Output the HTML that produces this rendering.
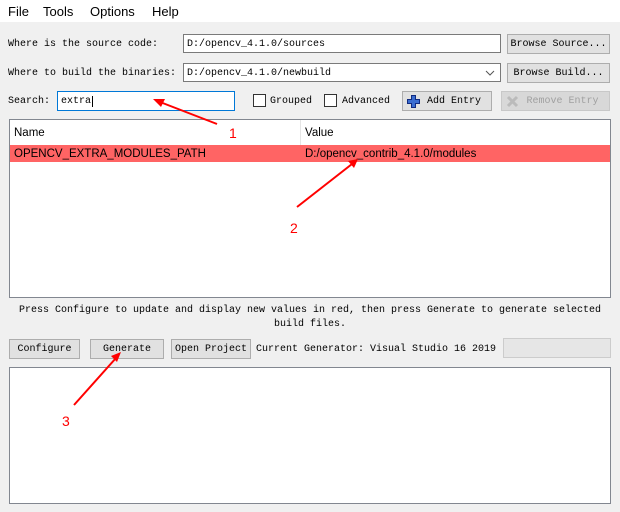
<!DOCTYPE html>
<html><head><style>
*{box-sizing:border-box;margin:0;padding:0}
body{width:620px;height:512px;background:#f0f0f0;position:relative;overflow:hidden;font-family:"Liberation Mono","Noto Sans CJK SC",monospace;font-size:10px;color:#000}
.a{position:absolute;white-space:nowrap}
.menu{left:0;top:0;width:620px;height:22px;background:#fff;font-family:"Liberation Sans",sans-serif;font-size:13px}
.menu span{position:absolute;top:4px}
.inp{position:absolute;background:#fff;border:1px solid #7a7a7a;padding:4px 3px 0;line-height:12px}
.btn{position:absolute;background:#e1e1e1;border:1px solid #adadad;text-align:center;line-height:19px}
.cb{position:absolute;width:13px;height:13px;border:1px solid #333;background:#fff}
.sans{font-family:"Liberation Sans",sans-serif;font-size:11.5px}
</style></head><body>
<div class="a menu"><span style="left:8px">File</span><span style="left:43px">Tools</span><span style="left:90px">Options</span><span style="left:152px">Help</span></div>
<div class="a" style="left:8px;top:39px">Where is the source code:</div>
<div class="inp" style="left:183px;top:34px;width:318px;height:19px">D:/opencv_4.1.0/sources</div>
<div class="btn" style="left:507px;top:34px;width:103px;height:20px">Browse Source...</div>
<div class="a" style="left:8px;top:68px">Where to build the binaries:</div>
<div class="inp" style="left:183px;top:63px;width:318px;height:19px">D:/opencv_4.1.0/newbuild
<svg style="position:absolute;right:5px;top:6px" width="10" height="6"><path d="M1 1L5 5L9 1" stroke="#555" fill="none"/></svg></div>
<div class="btn" style="left:507px;top:63px;width:103px;height:20px">Browse Build...</div>
<div class="a" style="left:8px;top:96px">Search:</div>
<div class="inp" style="left:57px;top:91px;width:178px;height:20px;border-color:#0078d7">extra<span style="border-left:1px solid #000;margin-left:1px"></span></div>
<div class="cb" style="left:253px;top:94px"></div><div class="a" style="left:270px;top:96px">Grouped</div>
<div class="cb" style="left:324px;top:94px"></div><div class="a" style="left:342px;top:96px">Advanced</div>
<div class="btn" style="left:402px;top:91px;width:90px;height:20px;padding-left:14px">Add Entry
<svg style="position:absolute;left:4px;top:3px" width="13" height="13"><path d="M4.5 0.5h4v4h4v4h-4v4h-4v-4h-4v-4h4z" fill="#3a6cd0" stroke="#102a80"/></svg></div>
<div class="btn" style="left:501px;top:91px;width:109px;height:20px;color:#a0a0a0;background:#d8d8d8;border-color:#c8c8c8;padding-left:14px">Remove Entry
<svg style="position:absolute;left:4px;top:3px" width="13" height="13"><path d="M2 2L11 11M11 2L2 11" stroke="#bbb" stroke-width="3"/></svg></div>
<div class="a" style="left:9px;top:119px;width:602px;height:179px;background:#fff;border:1px solid #828790"></div>
<div class="a sans" style="left:14px;top:127px">Name</div>
<div class="a" style="left:300px;top:120px;width:1px;height:25px;background:#e5e5e5"></div>
<div class="a sans" style="left:305px;top:127px">Value</div>
<div class="a sans" style="left:10px;top:145px;width:600px;height:17px;background:#ff6464;padding-left:4px;line-height:18px">OPENCV_EXTRA_MODULES_PATH<span style="position:absolute;left:295px">D:/opencv_contrib_4.1.0/modules</span></div>
<div class="a" style="left:0;top:304px;width:620px;text-align:center;line-height:14px">Press Configure to update and display new values in red, then press Generate to generate selected<br>build files.</div>
<div class="btn" style="left:9px;top:339px;width:71px;height:20px">Configure</div>
<div class="btn" style="left:90px;top:339px;width:74px;height:20px">Generate</div>
<div class="btn" style="left:171px;top:339px;width:80px;height:20px">Open Project</div>
<div class="a" style="left:256px;top:344px">Current Generator: Visual Studio 16 2019</div>
<div class="a" style="left:503px;top:338px;width:108px;height:20px;background:#e6e6e6;border:1px solid #ccc"></div>
<div class="a" style="left:9px;top:367px;width:602px;height:137px;background:#fff;border:1px solid #828790"></div>
<svg class="a" style="left:0;top:0" width="620" height="512">
<g stroke="#f00" stroke-width="2" fill="#f00">
<line x1="217" y1="124" x2="160" y2="102"/><path d="M153 99L165 99L161 107Z" stroke="none"/>
<line x1="297" y1="207" x2="352" y2="164"/><path d="M358 159L348 161L354 168Z" stroke="none"/>
<line x1="74" y1="405" x2="116" y2="358"/><path d="M121 352L111 356L117 362Z" stroke="none"/>
</g>
<g fill="#f00" font-family="Liberation Sans" font-size="14"><text x="229" y="138">1</text><text x="290" y="233">2</text><text x="62" y="426">3</text></g>
</svg>
</body></html>
